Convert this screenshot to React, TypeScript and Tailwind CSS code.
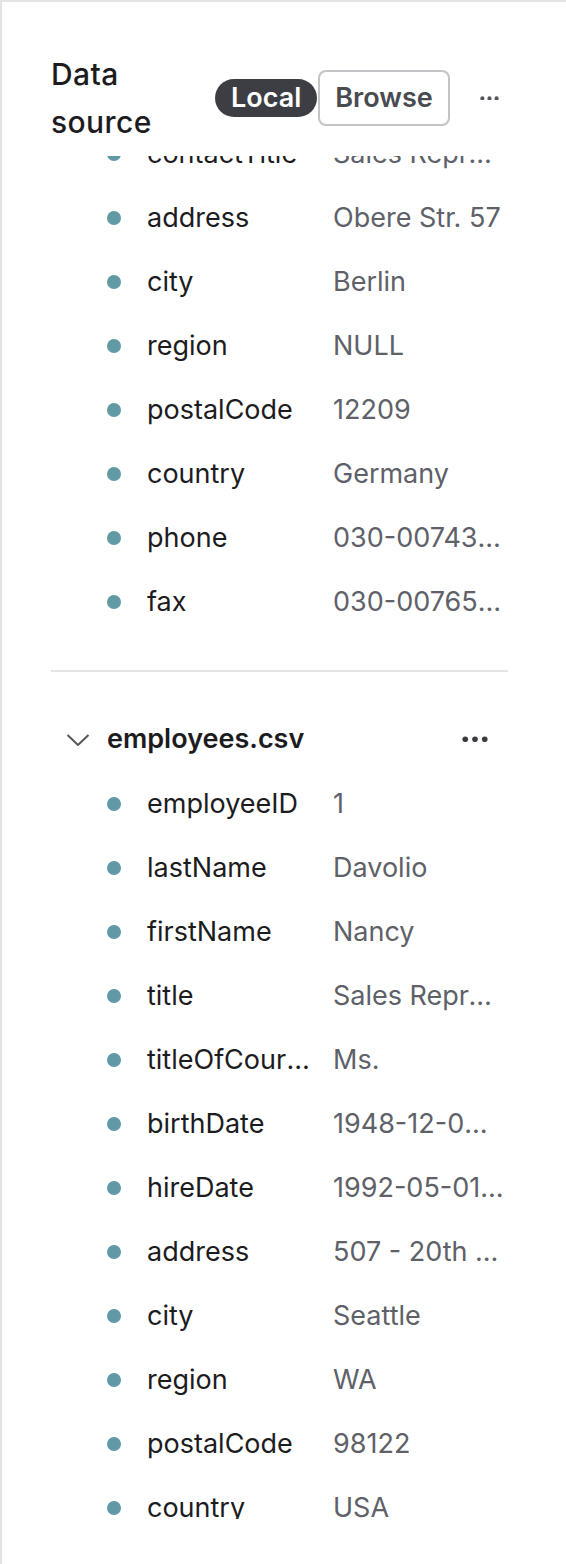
import React from 'react';

type Field = { name: string; value: string };

const customerFields: Field[] = [
  { name: 'contactTitle', value: 'Sales Representative' },
  { name: 'address', value: 'Obere Str. 57' },
  { name: 'city', value: 'Berlin' },
  { name: 'region', value: 'NULL' },
  { name: 'postalCode', value: '12209' },
  { name: 'country', value: 'Germany' },
  { name: 'phone', value: '030-0074321' },
  { name: 'fax', value: '030-0076545' },
];

const employeeFields: Field[] = [
  { name: 'employeeID', value: '1' },
  { name: 'lastName', value: 'Davolio' },
  { name: 'firstName', value: 'Nancy' },
  { name: 'title', value: 'Sales Representative' },
  { name: 'titleOfCourtesy', value: 'Ms.' },
  { name: 'birthDate', value: '1948-12-08 00:00:00' },
  { name: 'hireDate', value: '1992-05-01 00:00:00' },
  { name: 'address', value: '507 - 20th Ave. E. Apt. 2A' },
  { name: 'city', value: 'Seattle' },
  { name: 'region', value: 'WA' },
  { name: 'postalCode', value: '98122' },
  { name: 'country', value: 'USA' },
];

function Dots({ className }: { className?: string }) {
  return (
    <svg viewBox="0 0 24 6" className={className} fill="currentColor">
      <circle cx="3" cy="3" r="2.6" />
      <circle cx="12" cy="3" r="2.6" />
      <circle cx="21" cy="3" r="2.6" />
    </svg>
  );
}

function FieldRow({ field }: { field: Field }) {
  return (
    <div className="flex h-[64px] items-center pl-[105px] pr-[62px]">
      <span className="h-[14px] w-[14px] shrink-0 rounded-full bg-[#6199a6]" />
      <span className="ml-[26px] w-[186px] shrink-0 truncate pr-[16px] text-[#1c1c1e]">{field.name}</span>
      <span className="min-w-0 flex-1 truncate text-[#5e6168]">{field.value}</span>
    </div>
  );
}

export default function App() {
  return (
    <div
      className="flex h-[1564px] w-[566px] flex-col border-l-2 border-t-2 border-[#e4e4e4] bg-white text-[27px] leading-[32px]"
      style={{ fontFamily: 'Inter, "Liberation Sans", sans-serif' }}
    >
      {/* Panel header */}
      <div className="flex shrink-0 items-center pb-[10px] pl-[49px] pt-[48px]">
        <h2 className="w-[164px] text-[30px] font-medium leading-[48px] tracking-[0.4px] text-[#1c1c1e]">
          Data
          <br />
          source
        </h2>
        <span className="flex h-[38px] items-center rounded-full bg-[#3d3e43] px-[16px] font-semibold text-white">
          Local
        </span>
        <button className="ml-[1px] flex h-[56px] items-center rounded-[8px] border-2 border-[#c3c3c8] px-[15px] font-semibold text-[#4a4b51]">
          Browse
        </button>
        <Dots className="ml-[30px] w-[19px] text-[#55575c]" />
      </div>

      {/* Scrollable schema list */}
      <div className="min-h-0 flex-1 overflow-hidden">
        <div className="-mt-[34px]">
          {customerFields.map((f) => (
            <FieldRow key={f.name} field={f} />
          ))}

          <div className="ml-[49px] mr-[58px] mt-[36px] h-[2px] bg-[#e4e4e4]" />

          <div className="mt-[34px] flex h-[66px] items-center pl-[64px] pr-[78px]">
            <svg viewBox="0 0 24 12" className="h-[13px] w-[24px] text-[#55575c]" fill="none" stroke="currentColor" strokeWidth="2">
              <path d="M1.5 1.5l10.5 10 10.5-10" />
            </svg>
            <span className="ml-[17px] flex-1 font-semibold text-[#1c1c1e]">employees.csv</span>
            <Dots className="w-[26px] text-[#3a3b40]" />
          </div>

          {employeeFields.map((f) => (
            <FieldRow key={f.name} field={f} />
          ))}
        </div>
      </div>
      <div className="h-[45px] shrink-0" />
    </div>
  );
}
